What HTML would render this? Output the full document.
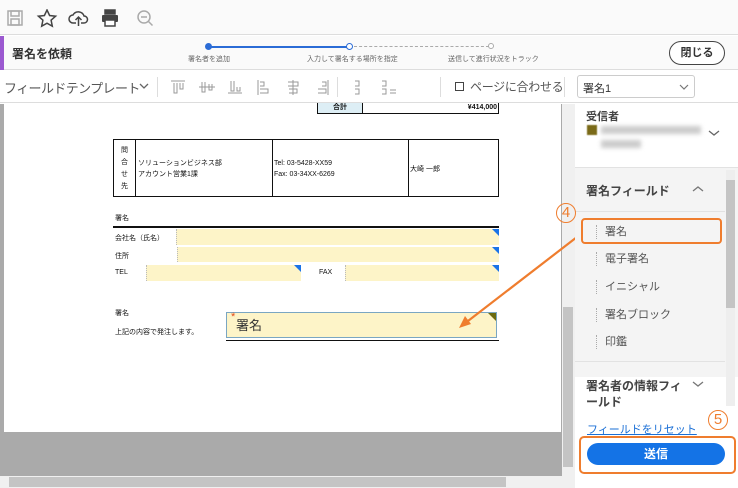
<!DOCTYPE html>
<html><head><meta charset="utf-8"><style>
*{box-sizing:border-box;margin:0;padding:0}
body{width:738px;height:488px;overflow:hidden;position:relative;background:#fff;font-family:"Liberation Sans","Noto Sans CJK JP",sans-serif;color:#333}
.a{position:absolute}
.t{position:absolute;white-space:nowrap}
.doc{font-size:7px;color:#111}
.fld{position:absolute;background:#fdf4c8;border-left:1px dotted #bbb}
.tri{position:absolute;right:0;top:0;width:0;height:0;border-top:7px solid #1a73e8;border-left:7px solid transparent}
.item{position:absolute;left:596px;font-size:11px;color:#555;border-left:1px dotted #aaa;padding-left:8px;height:14px;line-height:14px}
.chev{position:absolute}
</style></head><body>
<div class="a" style="left:0;top:0;width:738px;height:35px;background:#fafafa;border-bottom:1px solid #ddd"></div>
<svg class="a" style="left:6px;top:9px" width="160" height="20" fill="none" stroke-width="1.5">
<rect x="2" y="2" width="14" height="14" stroke="#aaa"/><rect x="5" y="2" width="8" height="5" stroke="#aaa"/><rect x="5" y="10" width="8" height="6" stroke="#aaa"/>
<path d="M41 1l2.6 5.5 6 .7-4.5 4 1.2 6-5.3-3-5.3 3 1.2-6-4.5-4 6-.7z" stroke="#444"/>
<path d="M70 14h-3a4 4 0 0 1 0-8 6 6 0 0 1 11 1 3.5 3.5 0 0 1 0 7h-3M72.5 17V8M69.5 11l3-3 3 3" stroke="#444"/>
<rect x="99" y="1" width="10" height="4" stroke="#444" fill="#444"/><rect x="96" y="6" width="16" height="7" rx="1" fill="#444"/><rect x="99" y="11" width="10" height="6" fill="#fff" stroke="#444"/>
<circle cx="138" cy="8" r="6" stroke="#aaa"/><path d="M142.5 12.5l4 4M135 8h6" stroke="#aaa"/>
</svg>
<div class="a" style="left:0;top:36px;width:738px;height:34px;background:#fafafa;border-bottom:1px solid #ddd"></div>
<div class="a" style="left:0;top:36px;width:4px;height:34px;background:#9b59d0"></div>
<div class="t" style="left:12px;top:45px;font-size:12px;font-weight:bold;color:#333">署名を依頼</div>
<div class="a" style="left:208px;top:46px;width:142px;height:2px;background:#2b6cd6"></div>
<div class="a" style="left:205px;top:43px;width:7px;height:7px;border-radius:50%;background:#2b6cd6"></div>
<div class="a" style="left:346px;top:43px;width:7px;height:7px;border-radius:50%;background:#fff;border:1.5px solid #2b6cd6"></div>
<div class="a" style="left:354px;top:46px;width:135px;border-top:1px dashed #aaa"></div>
<div class="a" style="left:488px;top:43px;width:6px;height:6px;border-radius:50%;border:1px solid #aaa;background:#fff"></div>
<div class="t" style="left:188px;top:54px;font-size:7px;color:#666">署名者を追加</div>
<div class="t" style="left:307px;top:54px;font-size:7px;color:#666">入力して署名する場所を指定</div>
<div class="t" style="left:448px;top:54px;font-size:7px;color:#666">送信して進行状況をトラック</div>
<div class="t" style="left:669px;top:41px;width:56px;height:24px;border:1px solid #444;border-radius:12px;font-size:11px;font-weight:bold;text-align:center;line-height:22px;background:#fff">閉じる</div>
<div class="a" style="left:0;top:71px;width:738px;height:32px;background:#fff;border-bottom:1px solid #ddd"></div>
<div class="t" style="left:4px;top:78px;font-size:13px;color:#555;letter-spacing:-0.6px">フィールドテンプレート</div>
<svg class="chev" style="left:139px;top:82px" width="10" height="8"><path d="M1 2l4 4 4-4" stroke="#666" fill="none" stroke-width="1.3"/></svg>
<div class="a" style="left:157px;top:77px;width:1px;height:20px;background:#ddd"></div>
<svg class="a" style="left:170px;top:78px" width="230" height="18" stroke="#999" fill="none">
<path d="M1 3h14M4 5v10h3V5M10 5v6h3V5"/>
<path d="M29 9h16M32 4v10h3V4M39 6v6h3V6"/>
<path d="M58 15h14M61 3v10h3V3M67 9v4h3V9"/>
<path d="M88 2v15M90 4h4v4h-4M90 11h8v4h-8"/>
<path d="M123 2v15M118 4h10v4H118M119 11h8v4h-8"/>
<path d="M158 2v15M152 4h4v4h-4M148 11h8v4h-8"/>
<path d="M185 3h4v5h-4M185 11h4v5h-4"/>
<path d="M212 3h4v5h-4M212 11h4v5h-4M220 12h6M220 15h6"/>
</svg>
<div class="a" style="left:176px;top:77px;width:0;height:0"></div>
<div class="a" style="left:337px;top:77px;width:1px;height:20px;background:#ddd"></div>
<div class="a" style="left:440px;top:77px;width:1px;height:20px;background:#ddd"></div>
<div class="a" style="left:455px;top:82px;width:9px;height:9px;border:1.5px solid #444"></div>
<div class="t" style="left:470px;top:78px;font-size:12px;color:#555;letter-spacing:-0.3px">ページに合わせる</div>
<div class="a" style="left:564px;top:77px;width:1px;height:20px;background:#ddd"></div>
<div class="a" style="left:577px;top:75px;width:118px;height:23px;border:1px solid #ccc;border-radius:3px"></div>
<div class="t" style="left:583px;top:80px;font-size:11px;color:#333">署名1</div>
<svg class="chev" style="left:679px;top:83px" width="10" height="8"><path d="M1 2l4 4 4-4" stroke="#777" fill="none" stroke-width="1.2"/></svg>
<div class="a" style="left:0;top:104px;width:562px;height:372px;background:#aaa"></div>
<div class="a" style="left:4px;top:104px;width:557px;height:328px;background:#fff"></div>
<div class="a" style="left:562px;top:104px;width:13px;height:372px;background:#f0f0f0"></div>
<div class="a" style="left:563px;top:307px;width:10px;height:160px;background:#c4c4c4"></div>
<div class="a" style="left:0;top:476px;width:575px;height:12px;background:#f0f0f0"></div>
<div class="a" style="left:9px;top:477px;width:497px;height:10px;background:#c4c4c4"></div>
<div class="a" style="left:317px;top:103px;width:46px;height:11px;background:#ddeef5;border:1px solid #111;border-top:none;font-size:7px;font-weight:bold;text-align:center;line-height:10px;color:#111">合計</div>
<div class="a doc" style="left:362px;top:103px;width:137px;height:11px;border:1px solid #111;border-top:none;text-align:right;font-weight:bold;line-height:10px;padding-right:1px">¥414,000</div>
<div class="a" style="left:113px;top:139px;width:386px;height:58px;border:1.5px solid #111"></div>
<div class="a" style="left:135px;top:139px;width:1px;height:58px;background:#111"></div>
<div class="a" style="left:272px;top:139px;width:1px;height:58px;background:#111"></div>
<div class="a" style="left:408px;top:139px;width:1px;height:58px;background:#111"></div>
<div class="a doc" style="left:121px;top:145px;width:8px;line-height:12px;font-size:7px">問合せ先</div>
<div class="t doc" style="left:138px;top:158px;line-height:11px">ソリューションビジネス部<br>アカウント営業1課</div>
<div class="t doc" style="left:274px;top:158px;line-height:11px">Tel: 03-5428-XX59<br>Fax: 03-34XX-6269</div>
<div class="t doc" style="left:410px;top:164px">大崎 一郎</div>
<div class="t doc" style="left:115px;top:213px">署名</div>
<div class="a" style="left:113px;top:226px;width:386px;height:2px;background:#111"></div>
<div class="t doc" style="left:115px;top:233px">会社名（氏名）</div>
<div class="fld" style="left:176px;top:229px;width:323px;height:16px"><div class="tri"></div></div>
<div class="t doc" style="left:115px;top:251px">住所</div>
<div class="fld" style="left:177px;top:247px;width:322px;height:15px"><div class="tri"></div></div>
<div class="t doc" style="left:115px;top:269px">TEL</div>
<div class="fld" style="left:146px;top:265px;width:155px;height:16px"><div class="tri"></div></div>
<div class="t doc" style="left:319px;top:269px">FAX</div>
<div class="fld" style="left:345px;top:265px;width:154px;height:16px"><div class="tri"></div></div>
<div class="t doc" style="left:115px;top:308px">署名</div>
<div class="t doc" style="left:115px;top:327px">上記の内容で発注します。</div>
<div class="a" style="left:226px;top:312px;width:271px;height:26px;background:#fdf4c8;border:1px solid #7aa6c2"><div class="a" style="right:0;top:0;border-top:8px solid #6b6b10;border-left:8px solid transparent"></div></div>
<div class="t" style="left:231px;top:311px;font-size:11px;color:#e04b1c">*</div>
<div class="t" style="left:236px;top:315px;font-size:13px;color:#333">署名</div>
<div class="a" style="left:226px;top:340px;width:273px;height:1px;background:#111"></div>
<svg class="a" style="left:0;top:0" width="738" height="488"><path d="M577 237L468 321" stroke="#ef7d2e" stroke-width="2.2"/><path d="M459 328l6-12 6 8z" fill="#ef7d2e"/></svg>
<div class="a" style="left:575px;top:104px;width:163px;height:384px;background:#fff"></div>
<div class="t" style="left:586px;top:108px;font-size:11px;font-weight:bold;color:#444">受信者</div>
<div class="a" style="left:587px;top:125px;width:10px;height:10px;background:#7a6a18;filter:blur(.6px)"></div>
<div class="a" style="left:601px;top:126px;width:100px;height:8px;background:#ccc;filter:blur(2px)"></div>
<div class="a" style="left:601px;top:140px;width:40px;height:8px;background:#ccc;filter:blur(2px)"></div>
<svg class="chev" style="left:708px;top:129px" width="12" height="8"><path d="M1 2l5 4 5-4" stroke="#666" fill="none" stroke-width="1.3"/></svg>
<div class="a" style="left:575px;top:167px;width:163px;height:210px;background:#f4f4f4;border-top:1px solid #e2e2e2"></div>
<div class="t" style="left:586px;top:182px;font-size:12px;font-weight:bold;color:#444">署名フィールド</div>
<svg class="chev" style="left:692px;top:185px" width="12" height="8"><path d="M1 6l5-4 5 4" stroke="#777" fill="none" stroke-width="1.3"/></svg>
<div class="a" style="left:575px;top:211px;width:150px;height:1px;background:#e2e2e2"></div>
<div class="item" style="top:225px">署名</div>
<div class="item" style="top:252px">電子署名</div>
<div class="item" style="top:280px">イニシャル</div>
<div class="item" style="top:308px">署名ブロック</div>
<div class="item" style="top:335px">印鑑</div>
<div class="a" style="left:575px;top:361px;width:150px;height:1px;background:#e2e2e2"></div>
<div class="t" style="left:586px;top:378px;font-size:12px;font-weight:bold;color:#444;line-height:16px">署名者の情報フィ<br>ールド</div>
<svg class="chev" style="left:692px;top:380px" width="12" height="8"><path d="M1 2l5 4 5-4" stroke="#777" fill="none" stroke-width="1.3"/></svg>
<div class="a" style="left:726px;top:170px;width:9px;height:236px;background:#eee"></div>
<div class="a" style="left:726px;top:180px;width:9px;height:128px;background:#c4c4c4"></div>
<div class="t" style="left:587px;top:421px;font-size:11px;color:#1a6fd6;text-decoration:underline">フィールドをリセット</div>
<div class="a" style="left:587px;top:443px;width:138px;height:22px;border-radius:11px;background:#1473e6;color:#fff;font-size:12px;font-weight:bold;text-align:center;line-height:22px">送信</div>
<div class="a" style="left:581px;top:218px;width:141px;height:26px;border:2px solid #ef7d2e;border-radius:4px"></div>
<div class="a" style="left:579px;top:436px;width:157px;height:38px;border:2px solid #ef7d2e;border-radius:5px"></div>
<div class="a" style="left:556px;top:203px;width:20px;height:20px;border:1.3px solid #ef7d2e;border-radius:50%;color:#ef7d2e;font-size:15px;text-align:center;line-height:18px">4</div>
<div class="a" style="left:708px;top:410px;width:20px;height:20px;border:1.3px solid #ef7d2e;border-radius:50%;color:#ef7d2e;font-size:15px;text-align:center;line-height:18px">5</div>
</body></html>
